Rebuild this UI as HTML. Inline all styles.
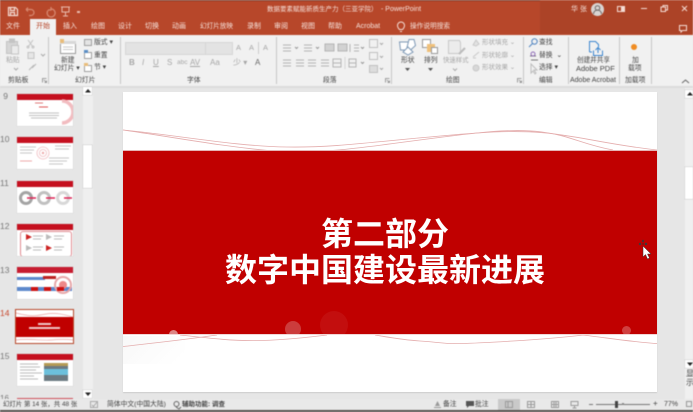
<!DOCTYPE html>
<html lang="zh"><head><meta charset="utf-8"><title>PowerPoint</title>
<style>
html,body{margin:0;padding:0;width:693px;height:412px;overflow:hidden;background:#e6e6e6}
body{position:relative;font-family:"Liberation Sans","Noto Sans CJK SC",sans-serif}
.a{position:absolute}
.t{position:absolute;white-space:nowrap;line-height:12px;font-size:6.800px;color:#444}
.g{color:#a6a6a6}
.w{color:#f6e2db}
.tab{top:21px;font-size:7px}
.sep{position:absolute;top:37px;height:47px;width:1px;background:#c6c6c6}
.thumb{position:absolute;left:17px;width:56px;height:32px;background:#fff;box-shadow:0 0 0 .5px #d6d6d6;overflow:hidden}
.thumb .h{position:absolute;left:0;top:0;width:100%;height:5.500px;background:#c5101f}
.n{position:absolute;width:8px;left:0;text-align:right;font-size:8.500px;line-height:12px;color:#777}
svg{position:absolute;overflow:visible}
#chrome{position:absolute;left:0;top:0;width:693px;height:412px;filter:blur(.45px)}
</style></head><body>
<div id="chrome">
<div class="a" style="left:0;top:0;width:693px;height:35px;background:#b7472a"></div>
<div class="a" style="left:0;top:0;width:693px;height:1px;background:#7a3a28"></div>
<div class="a" style="left:540px;top:0;width:153px;height:34px;background:#ac4327"></div>
<div class="a" style="left:0;top:35px;width:693px;height:51px;background:#f1f1f1"></div>
<div class="a" style="left:0;top:86px;width:693px;height:2px;background:#dcdcdc"></div>
<div class="a" style="left:30px;top:19px;width:26px;height:17px;background:#f1f1f1"></div>

<!-- QAT -->
<svg style="left:7px;top:5px" width="60" height="14" fill="none" stroke="#f4dcd4" stroke-width="1.200">
<path d="M1.500 2.500h7l2 2v6h-9zM3.500 2.500v3h4v-3M3.500 10.500v-3h4v3"/>
<path d="M19 4.500l2-2M19 4.500l2 2M19 4.500h5a3 3 0 0 1 0 6h-2" stroke="#d88a72"/>
<path d="M48 3a4 4 0 1 1-3 1.500M48 1v3h-3" stroke="#d88a72" transform="translate(-4 1)"/>
</svg>
<svg style="left:60px;top:5px" width="24" height="14" fill="none" stroke="#e9bcae" stroke-width="1"><path d="M1 2h9M2 2v5h7V2M5.500 7v4M3 11h5"/><rect x="17" y="6" width="3" height="2" fill="#e9bcae" stroke="none"/></svg>

<div class="t w" style="left:267px;top:4px;font-size:6.500px">数据要素赋能新质生产力（三亚学院）</div>
<div class="t w" style="left:381px;top:4px;font-size:7px">- PowerPoint</div>

<!-- title right -->
<div class="t w" style="left:571px;top:4px;font-size:7px">华 张</div>
<div class="a" style="left:591px;top:3px;width:13px;height:13px;border-radius:50%;background:#d9d4d2"></div>
<svg style="left:591px;top:3px" width="13" height="13" fill="none" stroke="#6f6a68" stroke-width="1"><circle cx="6.500" cy="5" r="2.300"/><path d="M2.500 11a4 4 0 0 1 8 0"/></svg>
<svg style="left:616px;top:4px" width="77" height="28" fill="none" stroke="#f4dcd4" stroke-width="1">
<rect x="1.500" y="2.500" width="7" height="5"/><rect x="5" y="3" width="3" height="4" fill="#f4dcd4" stroke="none"/>
<path d="M25 4.500h6"/><rect x="45" y="3" width="4.500" height="4.500"/><path d="M47 3V1.500h4.500V6H50"/>
<path d="M66 2l5 5M71 2l-5 5"/><path d="M63.500 21.500h7v5h-4l-1.500 1.500v-1.500h-1.500z"/>
</svg>

<!-- tabs -->
<div class="t w tab" style="left:6px">文件</div>
<div class="t tab" style="left:36px;color:#b7472a">开始</div>
<div class="t w tab" style="left:63px">插入</div>
<div class="t w tab" style="left:91px">绘图</div>
<div class="t w tab" style="left:118px">设计</div>
<div class="t w tab" style="left:145px">切换</div>
<div class="t w tab" style="left:172px">动画</div>
<div class="t w tab" style="left:200px;font-size:6.600px">幻灯片放映</div>
<div class="t w tab" style="left:247px">录制</div>
<div class="t w tab" style="left:274px">审阅</div>
<div class="t w tab" style="left:301px">视图</div>
<div class="t w tab" style="left:328px">帮助</div>
<div class="t w tab" style="left:356px">Acrobat</div>
<svg style="left:396px;top:21px" width="10" height="12" fill="none" stroke="#f4dcd4"><path d="M3.500 8.500C2 7 1.500 6 1.500 4.500a3.500 3.500 0 0 1 7 0C8.500 6 8 7 6.500 8.500zM4 10.500h2"/></svg>
<div class="t w tab" style="left:410px;font-size:6.700px">操作说明搜索</div>

<!-- Separators -->
<div class="sep" style="left:48px"></div>
<div class="sep" style="left:120px"></div>
<div class="sep" style="left:276px"></div>
<div class="sep" style="left:391px"></div>
<div class="sep" style="left:523px"></div>
<div class="sep" style="left:568px"></div>
<div class="sep" style="left:619px"></div>
<div class="sep" style="left:651px"></div>

<!-- clipboard -->
<svg style="left:5px;top:39px" width="42" height="34" fill="none" stroke="#c4c4c4">
<rect x="1.500" y="2.500" width="11" height="12" fill="#d6d6d6"/><rect x="4.500" y="0" width="5" height="3.500" fill="#c4c4c4"/><rect x="6.500" y="6.500" width="7" height="8.500" fill="#ebebeb"/>
<path d="M23 1l5 7M28 1l-5 7"/><circle cx="23" cy="8" r="1"/><circle cx="28" cy="8" r="1"/>
<rect x="23" y="13.500" width="6" height="6" fill="#e6e6e6"/><path d="M36 15l2 2 2-2" stroke="#aaa"/>
<path d="M24 31l5-5M27 29l4-4" stroke="#b8b8b8"/><path d="M11 29l2 2 2-2" stroke="#aaa" transform="translate(-2 0)"/>
</svg>
<div class="t g" style="left:6px;top:55px">粘贴</div>
<div class="t" style="left:8px;top:75px">剪贴板</div>
<svg style="left:42px;top:78px" width="5" height="5" fill="none" stroke="#888" stroke-width=".8"><path d="M.5 4.500v-4h4M2 2l2.500 2.500M4.500 2.500v2h-2"/></svg>

<!-- slides group -->
<svg style="left:59px;top:39px" width="18" height="16" fill="none" stroke="#9b9b9b"><rect x="1.500" y="3.500" width="15" height="11" fill="#fff"/><path d="M4 8h10M4 10.500h10" stroke="#c8c8c8"/><rect x="1" y="2" width="16" height="3" fill="#d8d8d8" stroke="none"/><rect x="1" y="0" width="4" height="4" fill="#e9bd7a" stroke="none"/></svg>
<div class="t" style="left:61px;top:55px">新建</div>
<div class="t" style="left:54px;top:63px">幻灯片 ▾</div>
<svg style="left:84px;top:39px" width="10" height="34" fill="none" stroke="#a0a0a0"><rect x=".5" y=".5" width="7" height="6" fill="#e4e4e4"/><rect x=".5" y="13.500" width="7" height="6" fill="#fff"/><rect x="0" y="11" width="4" height="3" fill="#5b8ec4" stroke="none"/><rect x=".5" y="26.500" width="7" height="6" fill="#fff"/><rect x="0" y="24" width="4" height="3" fill="#e9bd7a" stroke="none"/></svg>
<div class="t" style="left:94px;top:37px">版式 ▾</div>
<div class="t" style="left:94px;top:50px">重置</div>
<div class="t" style="left:94px;top:62px">节 ▾</div>
<div class="t" style="left:75px;top:75px">幻灯片</div>

<!-- font -->
<div class="a" style="left:125px;top:42px;width:79px;height:11px;background:#e3e3e3;border:.5px solid #d6d6d6"></div>
<div class="a" style="left:205px;top:42px;width:26px;height:11px;background:#e3e3e3;border:.5px solid #d6d6d6"></div>
<div class="t g" style="left:236px;top:42px;font-size:7.500px">A</div>
<div class="t g" style="left:249px;top:42px;font-size:7.500px">A</div>
<div class="a" style="left:258px;top:42px;width:1px;height:12px;background:#ccc"></div>
<div class="t g" style="left:263px;top:42px;font-size:7.500px">A</div>
<div class="t g" style="left:129px;top:57px;font-size:8px;font-weight:bold">B</div>
<div class="t g" style="left:142px;top:57px;font-size:8px;font-style:italic">I</div>
<div class="t g" style="left:153px;top:57px;font-size:8px;text-decoration:underline">U</div>
<div class="t g" style="left:167px;top:57px;font-size:8px">S</div>
<div class="t g" style="left:177px;top:57px;font-size:6.500px">abc</div>
<div class="t g" style="left:190px;top:57px;font-size:8px;text-decoration:underline">AV</div>
<div class="t g" style="left:210px;top:57px;font-size:8px">Aa</div>
<div class="t g" style="left:233px;top:57px;font-size:8px">少 ▾</div>
<div class="t" style="left:255px;top:57px;font-size:8px;color:#666">A</div>
<div class="t" style="left:187px;top:75px">字体</div>

<!-- paragraph -->
<svg style="left:283px;top:44px" width="105" height="26" fill="none" stroke="#b4b4b4">
<path d="M0 1h8M0 4h8M0 7h8M21 1h8M21 4h8M21 7h8M67 0v8M71 1h5M71 4h5M71 7h5"/>
<path d="M12 3l1.500 1.500L15 3M33 3l1.500 1.500L36 3M78 3l1.500 1.500L81 3M78 18l1.500 1.500L81 18" stroke="#999"/>
<rect x="42" y="0" width="9" height="7" fill="#d2d2d2"/><rect x="55" y="0" width="9" height="7" fill="#d2d2d2"/>
<path d="M0 16h8M0 19h8M0 22h8M13 16h8M13 19h8M13 22h8M25 16h8M25 19h8M25 22h8M38 16h8M38 19h8M38 22h8M50 15h8v8h-8zM50 19h8M66 15h7v8h-7zM66 19h7"/>
<path d="M62 13v12" stroke="#d4d4d4"/>
</svg>
<svg style="left:369px;top:39px" width="16" height="34" fill="none" stroke="#c0c0c0"><rect x=".5" y=".5" width="8" height="8"/><rect x=".5" y="13.500" width="8" height="7"/><rect x=".5" y="26.500" width="8" height="7" fill="#ddd"/><path d="M11 4l1.500 1.500L14 4M11 17l1.500 1.500L14 17M11 29l1.500 1.500L14 29" stroke="#aaa"/></svg>
<div class="t" style="left:323px;top:75px">段落</div>
<svg style="left:385px;top:78px" width="5" height="5" fill="none" stroke="#888" stroke-width=".8"><path d="M.5 4.500v-4h4M2 2l2.500 2.500M4.500 2.500v2h-2"/></svg>

<!-- drawing -->
<svg style="left:399px;top:39px" width="72" height="20" fill="none" stroke="#7d98b5">
<path d="M.5 3h9l1 8H1.500z" fill="#fff"/><path d="M10 .5h5l1.500 6-5.500 5-3-3z" fill="#fff"/><path d="M9 8l5 5-5 3-5-3z" fill="#fff"/>
<rect x="23.500" y=".5" width="8" height="8" fill="#fff" stroke="#999"/><rect x="28" y="5" width="8" height="8" fill="#efc07a" stroke="none"/><rect x="32.500" y="8.500" width="6" height="6" fill="#fff" stroke="#999"/>
<path d="M49.500 1.500h11l1 2v11h-12z" stroke="#c8c8c8" fill="#ececec"/><path d="M60 15l6-6" stroke="#bbb" stroke-width="2"/>
</svg>
<div class="t" style="left:401px;top:55px">形状</div>
<div class="t" style="left:424px;top:55px">排列</div>
<div class="t g" style="left:443px;top:55px;font-size:6.400px">快速样式</div>
<svg style="left:405px;top:68px" width="60" height="4"><path d="M0 0h5L2.500 3z" fill="#555"/><path d="M23 0h5L25.500 3z" fill="#555"/><path d="M48 .5l2 2 2-2" fill="none" stroke="#aaa"/></svg>
<svg style="left:472px;top:39px" width="9" height="34" fill="none" stroke="#c8c8c8"><path d="M1 6l3-5 3 4-3 2z" fill="#e2e2e2"/><path d="M1 18l6-5M1 19h3"/><circle cx="4" cy="29" r="3" fill="#d8d8d8"/></svg>
<div class="t g" style="left:482px;top:37px;font-size:6.500px">形状填充 ⌄</div>
<div class="t g" style="left:482px;top:50px;font-size:6.500px">形状轮廓 ⌄</div>
<div class="t g" style="left:482px;top:62px;font-size:6.500px">形状效果 ⌄</div>
<div class="t" style="left:446px;top:75px">绘图</div>
<svg style="left:517px;top:78px" width="5" height="5" fill="none" stroke="#888" stroke-width=".8"><path d="M.5 4.500v-4h4M2 2l2.500 2.500M4.500 2.500v2h-2"/></svg>

<!-- edit -->
<svg style="left:528px;top:38px" width="12" height="36" fill="none" stroke="#4f83c0"><circle cx="6.500" cy="3.500" r="2.700"/><path d="M4.500 5.500L1 9"/><path d="M2 18h6M3 22h7" stroke="#777"/><circle cx="5" cy="16" r="2" stroke="#8f6bb8"/><path d="M3 26v9l2-2 2 3 1-1-2-3h3z" stroke="#bdbdbd"/></svg>
<div class="t" style="left:539px;top:37px">查找</div>
<div class="t" style="left:539px;top:50px">替换 &nbsp;⌄</div>
<div class="t" style="left:539px;top:62px">选择 ▾</div>
<div class="t" style="left:539px;top:75px">编辑</div>

<!-- acrobat -->
<svg style="left:589px;top:41px" width="16" height="17" fill="none" stroke="#3c86cf"><path d="M.5 11V.5h6l3 3V6M.5 11H3"/><path d="M4.500 9.500v5h9v-5M9 12V6.500M6.500 9L9 6.500 11.500 9"/></svg>
<div class="t" style="left:577px;top:55px;font-size:6.600px">创建并共享</div>
<div class="t" style="left:576px;top:63px;font-size:7.500px">Adobe PDF</div>
<div class="t" style="left:570px;top:75px;font-size:7px">Adobe Acrobat</div>

<!-- addins -->
<div class="a" style="left:631px;top:44px;width:6px;height:6px;border-radius:50%;background:#f08c22"></div>
<div class="t" style="left:632px;top:55px">加</div>
<div class="t" style="left:628px;top:63px">载项</div>
<div class="t" style="left:625px;top:75px">加载项</div>
<svg style="left:681px;top:79px" width="10" height="6" fill="none" stroke="#666"><path d="M1 4l3.500-3L8 4"/></svg>

<!-- thumbnail panel -->
<div class="a" style="left:83px;top:88px;width:10px;height:312px;background:#efefef"></div>
<div class="a" style="left:83px;top:145px;width:9px;height:43px;background:#fff;box-shadow:0 0 0 .5px #c8c8c8"></div>
<div class="a" style="left:83px;top:87px;width:9px;height:8px;background:#fff;box-shadow:0 0 0 .5px #ccc"></div>
<div class="a" style="left:83px;top:390px;width:9px;height:8px;background:#fff;box-shadow:0 0 0 .5px #ccc"></div>
<svg style="left:85px;top:89px" width="6" height="4"><path d="M3 0l3 3.500H0z" fill="#222"/></svg>
<svg style="left:85px;top:392px" width="6" height="4"><path d="M3 4L0 .5h6z" fill="#222"/></svg>

<div class="n" style="top:90px">9</div>
<div class="thumb" style="top:94px"><div class="h"></div>
<svg style="left:0;top:0" width="56" height="32" fill="none"><path d="M18 9h8" stroke="#d77" stroke-width="1"/><path d="M22 13h9" stroke="#d55" stroke-width="1"/><path d="M12 19h30M12 21.500h30M14 24h26" stroke="#aaa" stroke-width=".8"/><path d="M45 7a11 11 0 0 1 0 22" stroke="#f2bcc0" stroke-width="3.500"/></svg></div>
<div class="n" style="top:133px">10</div>
<div class="thumb" style="top:137px"><div class="h"></div>
<svg style="left:0;top:0" width="56" height="32" fill="none"><path d="M3 10h16M3 13h14M3 16h12M38 9h16M38 12h14M32 21h20M32 24h18M32 27h14" stroke="#b4b4b4" stroke-width=".8"/><path d="M3 24h12" stroke="#eaa" stroke-width="1"/><circle cx="26" cy="16" r="6" stroke="#f0bcc0" stroke-width=".8"/><circle cx="26" cy="16" r="3.500" stroke="#f0bcc0" stroke-width=".8"/><circle cx="26" cy="16" r="1.200" fill="#eaa"/></svg></div>
<div class="n" style="top:177px">11</div>
<div class="thumb" style="top:181px"><div class="h"></div>
<svg style="left:0;top:0" width="56" height="32" fill="none"><circle cx="9" cy="17" r="5.500" stroke="#a4a4a4" stroke-width="3"/><circle cx="27" cy="17" r="5.500" stroke="#c0c0c0" stroke-width="3"/><circle cx="46" cy="17" r="5.500" stroke="#d8d8d8" stroke-width="3"/><path d="M10 17h9M29 17h9M47 17h8" stroke="#d25" stroke-width="1.500"/></svg></div>
<div class="n" style="top:220px">12</div>
<div class="thumb" style="top:224px"><div class="h"></div><div class="a" style="left:3px;top:7px;width:50px;height:24px;border:1px solid #e08a90;border-radius:3px"></div>
<svg style="left:0;top:0" width="56" height="32"><path d="M9 10l6 3-6 3zM29 21l6 3-6 3z" fill="#c22"/><path d="M29 10l6 3-6 3zM9 21l6 3-6 3z" fill="#bbb"/><path d="M16 12h10M16 15h8M37 12h10M37 15h8M16 23h10M16 26h8M37 23h10M37 26h8" stroke="#bbb" stroke-width="1"/></svg></div>
<div class="n" style="top:264px">13</div>
<div class="thumb" style="top:267px"><div class="h" style="background:#c71c30"></div><div class="a" style="left:0;top:10px;width:28px;height:3px;background:#5c88cc"></div><div class="a" style="left:0;top:20px;width:55px;height:4px;background:#5c88cc"></div><div class="a" style="left:26px;top:9px;width:13px;height:3px;background:#b22"></div><div class="a" style="left:37px;top:9px;width:18px;height:18px;border-radius:50%;border:2px solid #e7a6a8;box-sizing:border-box"></div><div class="a" style="left:42px;top:14px;width:8px;height:8px;border-radius:50%;background:#e88"></div><div class="a" style="left:14px;top:20px;width:7px;height:4px;background:#c11"></div><div class="a" style="left:27px;top:20px;width:7px;height:4px;background:#c11"></div><div class="a" style="left:40px;top:20px;width:7px;height:4px;background:#c11"></div></div>
<div class="n" style="top:307px;color:#c8492f">14</div>
<div class="a" style="left:15px;top:309px;width:57px;height:33px;border:1.500px solid #b7472a;background:#fff;overflow:hidden"><div class="a" style="left:0;top:7px;width:57px;height:20px;background:#c00000"></div><div class="a" style="left:22px;top:13px;width:13px;height:2px;background:#f0c8c8"></div><div class="a" style="left:13px;top:17px;width:31px;height:2px;background:#f0c8c8"></div><svg style="left:0;top:0" width="57" height="33" fill="none" stroke="#e9a6a6" stroke-width=".7"><path d="M0 3c15 4 20 3 30 1s20 1 27 3M0 30c15-2 25 1 35 0s15-1 22 0"/></svg></div>
<div class="n" style="top:350px">15</div>
<div class="thumb" style="top:354px"><div class="h"></div>
<svg style="left:0;top:0" width="56" height="32" fill="none"><path d="M3 10h18M3 13h20M3 16h16M3 19h22M3 22h14M3 25h18" stroke="#bbb" stroke-width="1"/></svg>
<div class="a" style="left:27px;top:9px;width:24px;height:18px;background:#6c7a82"></div><div class="a" style="left:27px;top:15px;width:24px;height:6px;background:#6cc0dc"></div><div class="a" style="left:27px;top:9px;width:24px;height:3px;background:#b59a55"></div></div>
<div class="n" style="top:393px;font-size:8px">16</div>
<div class="a" style="left:17px;top:398px;width:56px;height:2px;background:#c5101f;opacity:.7"></div>

<!-- right scrollbar -->
<div class="a" style="left:685px;top:88px;width:8px;height:312px;background:#f0f0f0"></div>
<div class="a" style="left:685px;top:90px;width:8px;height:8px;background:#fff;box-shadow:0 0 0 .5px #ccc"></div>
<div class="a" style="left:685px;top:167px;width:8px;height:32px;background:#fff;box-shadow:0 0 0 .5px #ccc"></div>
<div class="a" style="left:685px;top:360px;width:8px;height:8px;background:#fff;box-shadow:0 0 0 .5px #ccc"></div>
<svg style="left:687px;top:362px" width="6" height="4"><path d="M3 4L0 .5h6z" fill="#222"/></svg>
<svg style="left:687px;top:92px" width="6" height="4"><path d="M3 0l3 3.500H0z" fill="#222"/></svg>
<div class="a" style="left:686px;top:369px;width:7px;height:20px;overflow:hidden"><div class="t" style="left:0;top:0;font-size:8px;line-height:9px;width:8px;white-space:normal;color:#444">显示</div></div>

<!-- status bar -->
<div class="a" style="left:0;top:399px;width:693px;height:13px;background:#e9e9e9"></div>
<div class="a" style="left:0;top:409.500px;width:693px;height:2.500px;background:#55504c"></div>
<div class="t" style="left:3px;top:399px;font-size:6.400px">幻灯片 第 14 张，共 48 张</div>
<svg style="left:90px;top:401px" width="9" height="8" fill="none" stroke="#aaa"><rect x=".5" y=".5" width="7" height="6"/><path d="M2 4l1.500 1.500L7 1"/></svg>
<div class="t" style="left:107px;top:399px">简体中文(中国大陆)</div>
<svg style="left:173px;top:401px" width="9" height="8" fill="none" stroke="#666"><circle cx="3.500" cy="3" r="2.500"/><path d="M3 6l3 2 2-2"/></svg>
<div class="t" style="left:182px;top:399px;font-size:6.500px;font-weight:bold;color:#444">辅助功能: 调查</div>
<svg style="left:434px;top:401px" width="7" height="8" fill="#999"><path d="M3.500 0L1 5h5zM0 6h7v1H0z"/></svg>
<div class="t" style="left:443px;top:399px">备注</div>
<svg style="left:466px;top:401px" width="8" height="8" fill="#555"><path d="M0 0h8v5H3L1 7V5H0z"/></svg>
<div class="t" style="left:475px;top:399px">批注</div>
<div class="a" style="left:498px;top:399px;width:22px;height:11px;background:#c9c9c9"></div>
<svg style="left:505px;top:401px" width="100" height="8" fill="none" stroke="#9a9a9a"><rect x=".5" y=".5" width="7" height="6"/><path d="M3 .5v6"/><rect x="22.500" y=".5" width="7" height="6"/><path d="M22.500 3.500h7M26 .5v6"/><rect x="46.500" y=".5" width="7" height="6"/><path d="M46.500 3.500h7M49 .5v6M51 .5v6"/><path d="M66 .5h7v4h-7zM69.500 4.500v2M67.500 7h4"/></svg>
<div class="a" style="left:589px;top:404px;width:4px;height:1px;background:#777"></div>
<div class="a" style="left:596px;top:404px;width:54px;height:1px;background:#777"></div>
<div class="a" style="left:615px;top:401px;width:3px;height:7px;background:#444"></div>
<div class="a" style="left:622px;top:403px;width:2px;height:2px;background:#888"></div>
<div class="t" style="left:653px;top:398px;font-size:8px">+</div>
<div class="t" style="left:664px;top:399px;font-size:7px">77%</div>
<svg style="left:686px;top:401px" width="6" height="7" fill="none" stroke="#999"><rect x=".5" y=".5" width="5" height="5"/></svg>
</div>

<!-- slide -->
<div class="a" style="left:123px;top:92px;width:534px;height:300px;background:#fff;box-shadow:0 1px 1px #ccc;overflow:hidden">
<div class="a" style="left:0;top:244px;width:62px;height:28px;background:linear-gradient(135deg,#f8f8f8,#fff 90%)"></div>
<svg style="left:0;top:0" width="534" height="300" fill="none" stroke="#e4adad" stroke-width=".8">
<path d="M0 38C60 44 110 54 164 55S270 47 354 41s100 8 180 17"/>
<path d="M0 38C50 45 95 54 150 59S270 50 354 41s90 9 136 17"/>
<path d="M0 254.600C30 251 60 248 94 243"/>
<path d="M57 243C85 246 105 248.600 130 248.600S180 246 204 243"/>
<path d="M252 243C270 246 280 248 297 249S320 252 337 251.600 420 248 460 243C485 246 510 250 534 251.600"/>
</svg>
<div class="a" style="left:0;top:58.300px;width:534px;height:185px;background:#c00000;border-top:.5px solid #e4b4b4;border-bottom:.5px solid #f2d6d6;box-sizing:border-box;overflow:hidden">
<div class="a" style="left:45.500px;top:179px;width:9px;height:9px;border-radius:50%;background:#dd8484"></div>
<div class="a" style="left:162px;top:170px;width:16px;height:16px;border-radius:50%;background:#cc3c3c"></div>
<div class="a" style="left:197px;top:160px;width:28px;height:28px;border-radius:50%;background:#c30e0e"></div>
<div class="a" style="left:498.500px;top:175px;width:9px;height:9px;border-radius:50%;background:#d04040"></div>
</div>
<div class="a" style="left:0;top:124px;width:524px;text-align:center;color:#fff;font-weight:bold;font-size:32px;line-height:36px;white-space:nowrap">第二部分<br>数字中国建设最新进展</div>
<svg style="left:516px;top:148px" width="14" height="24"><circle cx="1" cy="4" r="1.200" fill="#3a3a3a"/><circle cx="7" cy="4" r="1.200" fill="#3a3a3a"/><circle cx="4" cy="1" r="1.200" fill="#4a3030"/><circle cx="4" cy="4" r="1.200" fill="#8a1010"/><path d="M4 6v11l2.500-2.500 2 4.500 2-1-2-4h3.500z" fill="#fff" stroke="#333" stroke-width=".5"/></svg>
</div>
</body></html>
